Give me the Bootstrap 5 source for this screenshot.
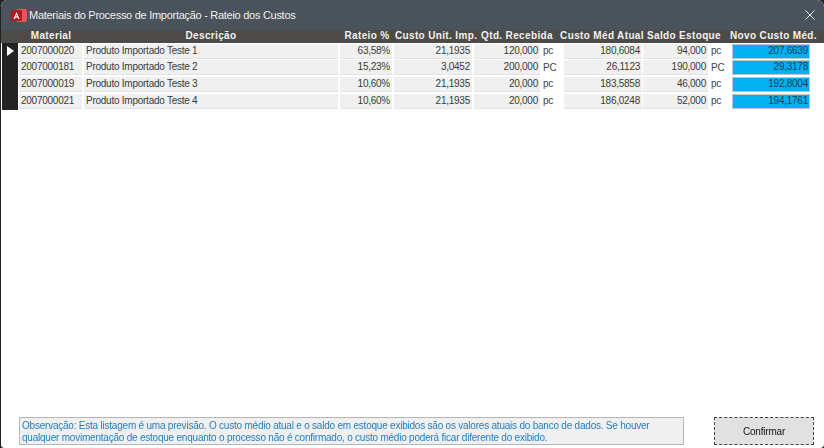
<!DOCTYPE html>
<html lang="pt">
<head>
<meta charset="utf-8">
<title>Materiais do Processo de Importação</title>
<link href="https://cdn.jsdelivr.net/npm/bootstrap@5.3.0/dist/css/bootstrap.min.css" rel="stylesheet">
<style>
html,body{height:100%;margin:0;background:#222;overflow:hidden}
body{font-family:"Liberation Sans",Arial,sans-serif;font-size:10px;letter-spacing:-.25px;color:#3a3a3a}
.win{width:824px;height:448px;background:#fff;border-radius:7px 7px 4px 4px;border-left:1px solid #222;overflow:hidden;filter:blur(.3px)}
.tbar{height:30px;background:#4a535b;color:#eef0f1;font-size:11px;letter-spacing:-.28px;padding-left:10px;padding-right:9px}
.tbar-ico{width:16px;height:15px;margin-right:2px}
.hdr{height:13px;background:#4d4b48;color:#f2f2f2;font-weight:700;font-size:10px;letter-spacing:.35px;line-height:11px;padding-left:1px}
.hdr>div{flex:none;white-space:nowrap;text-align:center}
.rw>div{flex:none;white-space:nowrap;overflow:hidden}
.rw{height:16.7px;padding-left:1px;line-height:13.5px}
.c0{width:16px;margin-right:1px}
.c1{width:63px;margin-right:2px}
.c2{width:254px;margin-right:2px}
.c3{width:52px;margin-right:2px}
.c4{width:78px;margin-right:2px}
.c5{width:66px}
.c6{width:24px}
.c7{width:78px;margin-right:1px}
.c8{width:65px}
.c9{width:24px}
.c10{width:78px}
.hc0{width:17px}.hc1{width:64px}.hc2{width:256px}.hc3{width:56px}.hc4{width:79px}.hc5{width:86px}.hc6{width:84px}.hc7{width:80px}.hc8{width:99px}
.ind{background:#232323;height:16.7px}
.cel{background:#f0f0f0;height:15px;border-bottom:1px solid #e3e3e3;padding:0 2px 0 2px;margin-top:.8px}
.r{text-align:right}
.un{padding-left:3px;color:#444;margin-top:1px}
.nv{background:#00b0f0;border:1px solid #b4c7d2;height:15px;margin-top:.8px;color:#123f5c;padding:0 1px;line-height:12.5px}
.ftr{padding:0 10px 3px 18px;margin-top:auto}
.obs{width:665px;height:28px;background:#f0f0f0;border:1px solid #b5b5b5;color:#1e7fc4;font-size:10px;letter-spacing:-.22px;line-height:11.5px;padding:2px 2px}
.cfm{width:100px;height:28px;background:#e1e1e1;border:1px dashed #444;color:#111;font-size:10px;letter-spacing:-.2px;display:flex;align-items:center;justify-content:center;padding:0;border-radius:0}
</style>
</head>
<body>
<div class="win d-flex flex-column">
  <div class="tbar d-flex align-items-center">
    <svg class="tbar-ico" viewBox="0 0 16 15"><rect x="5" y="1" width="11" height="13" rx="2" fill="#e5565e"/><rect x="0" y="2" width="11" height="11" rx="1.5" fill="#b0191f"/><path d="M5.5 4 L2.5 11 H4 L4.6 9.4 H6.6 L7.2 11 H8.6 Z M5.1 8.2 L5.6 6.5 L6.2 8.2 Z" fill="#fff"/></svg>
    <span>Materiais do Processo de Importação - Rateio dos Custos</span>
    <svg class="ms-auto" width="10" height="10" viewBox="0 0 10 10"><path d="M.5.5l9 9M9.5.5l-9 9" stroke="#eef0f1" stroke-width="1"/></svg>
  </div>
  <div class="hdr d-flex">
    <div class="hc0"></div><div class="hc1">Material</div><div class="hc2">Descrição</div><div class="hc3">Rateio %</div><div class="hc4">Custo Unit. Imp.</div><div class="hc5">Qtd. Recebida</div><div class="hc6">Custo Méd Atual</div><div class="hc7">Saldo Estoque</div><div class="hc8">Novo Custo Méd.</div>
  </div>
  <div class="rw d-flex">
    <div class="ind c0 d-flex align-items-center justify-content-center"><svg width="7" height="10" viewBox="0 0 7 10"><path d="M0 0l7 5-7 5z" fill="#fff"/></svg></div>
    <div class="cel c1">2007000020</div><div class="cel c2">Produto Importado Teste 1</div><div class="cel c3 r">63,58%</div><div class="cel c4 r">21,1935</div><div class="cel c5 r">120,000</div><div class="un c6">pc</div><div class="cel c7 r">180,6084</div><div class="cel c8 r">94,000</div><div class="un c9">pc</div><div class="nv c10 r">207,6639</div>
  </div>
  <div class="rw d-flex">
    <div class="ind c0"></div>
    <div class="cel c1">2007000181</div><div class="cel c2">Produto Importado Teste 2</div><div class="cel c3 r">15,23%</div><div class="cel c4 r">3,0452</div><div class="cel c5 r">200,000</div><div class="un c6">PC</div><div class="cel c7 r">26,1123</div><div class="cel c8 r">190,000</div><div class="un c9">PC</div><div class="nv c10 r">29,3178</div>
  </div>
  <div class="rw d-flex">
    <div class="ind c0"></div>
    <div class="cel c1">2007000019</div><div class="cel c2">Produto Importado Teste 3</div><div class="cel c3 r">10,60%</div><div class="cel c4 r">21,1935</div><div class="cel c5 r">20,000</div><div class="un c6">pc</div><div class="cel c7 r">183,5858</div><div class="cel c8 r">46,000</div><div class="un c9">pc</div><div class="nv c10 r">192,8004</div>
  </div>
  <div class="rw d-flex">
    <div class="ind c0"></div>
    <div class="cel c1">2007000021</div><div class="cel c2">Produto Importado Teste 4</div><div class="cel c3 r">10,60%</div><div class="cel c4 r">21,1935</div><div class="cel c5 r">20,000</div><div class="un c6">pc</div><div class="cel c7 r">186,0248</div><div class="cel c8 r">52,000</div><div class="un c9">pc</div><div class="nv c10 r">194,1761</div>
  </div>
  <div class="ftr d-flex justify-content-between">
    <div class="obs">Observação: Esta listagem é uma previsão. O custo médio atual e o saldo em estoque exibidos são os valores atuais do banco de dados. Se houver qualquer movimentação de estoque enquanto o processo não é confirmado, o custo médio poderá ficar diferente do exibido.</div>
    <button type="button" class="btn cfm">Confirmar</button>
  </div>
</div>
</body>
</html>
